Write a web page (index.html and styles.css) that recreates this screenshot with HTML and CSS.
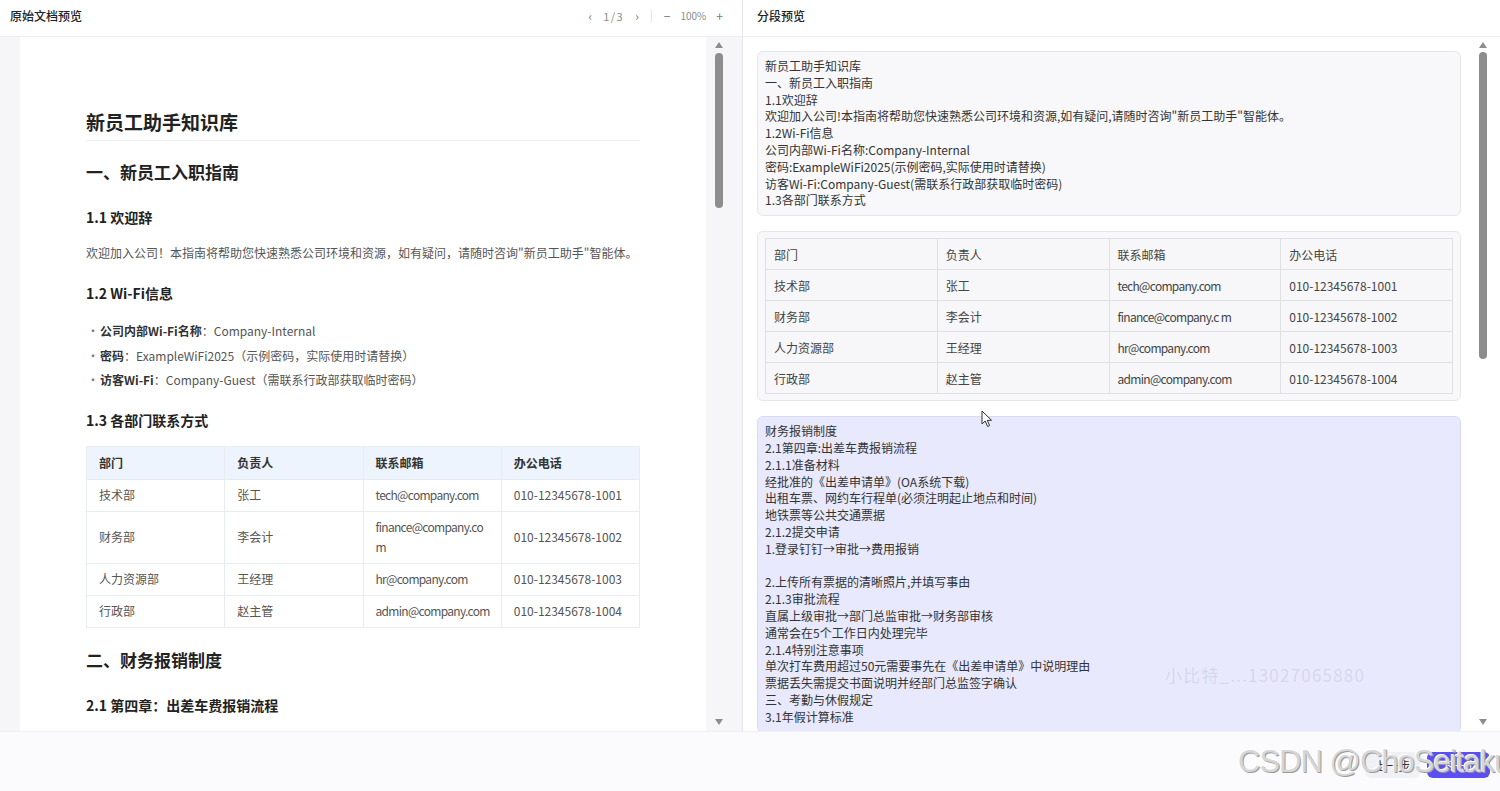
FILE: index.html
```html
<!DOCTYPE html>
<html lang="zh-CN">
<head>
<meta charset="utf-8">
<title>文档分段预览</title>
<link rel="stylesheet" href="styles.css">
</head>
<body>
<div class="app">
  <div class="panels">
    <section class="panel panel-left">
      <header class="panel-head">
        <span class="panel-title">原始文档预览</span>
        <div class="toolbar">
          <span class="tb-btn">‹</span>
          <span class="tb-page">1/3</span>
          <span class="tb-btn">›</span>
          <span class="tb-sep"></span>
          <span class="tb-btn">−</span>
          <span class="tb-zoom">100%</span>
          <span class="tb-btn">+</span>
        </div>
      </header>
      <div class="body-doc">
        <article class="doc">
          <h1>新员工助手知识库</h1>
          <h2>一、新员工入职指南</h2>
          <h3>1.1 欢迎辞</h3>
          <p>欢迎加入公司！本指南将帮助您快速熟悉公司环境和资源，如有疑问，请随时咨询"新员工助手"智能体。</p>
          <h3>1.2 Wi-Fi信息</h3>
          <ul class="doc-list">
            <li><span class="dot">·</span><span><strong>公司内部Wi-Fi名称</strong>：Company-Internal</span></li>
            <li><span class="dot">·</span><span><strong>密码</strong>：ExampleWiFi2025（示例密码，实际使用时请替换）</span></li>
            <li><span class="dot">·</span><span><strong>访客Wi-Fi</strong>：Company-Guest（需联系行政部获取临时密码）</span></li>
          </ul>
          <h3>1.3 各部门联系方式</h3>
          <table class="doc-table">
            <thead>
              <tr><th>部门</th><th>负责人</th><th>联系邮箱</th><th>办公电话</th></tr>
            </thead>
            <tbody>
              <tr><td>技术部</td><td>张工</td><td class="mail">tech@company.com</td><td>010-12345678-1001</td></tr>
              <tr><td>财务部</td><td>李会计</td><td class="mail">finance@company.co<br>m</td><td>010-12345678-1002</td></tr>
              <tr><td>人力资源部</td><td>王经理</td><td class="mail">hr@company.com</td><td>010-12345678-1003</td></tr>
              <tr><td>行政部</td><td>赵主管</td><td class="mail">admin@company.com</td><td>010-12345678-1004</td></tr>
            </tbody>
          </table>
          <h2>二、财务报销制度</h2>
          <h3>2.1 第四章：出差车费报销流程</h3>
        </article>
        <div class="scrollbar sb-left">
          <span class="sb-up"></span>
          <span class="sb-thumb"></span>
          <span class="sb-down"></span>
        </div>
      </div>
    </section>

    <section class="panel panel-right">
      <header class="panel-head">
        <span class="panel-title">分段预览</span>
      </header>
      <div class="body-seg">
        <div class="seg-list">
          <div class="seg">新员工助手知识库
一、新员工入职指南
1.1欢迎辞
欢迎加入公司!本指南将帮助您快速熟悉公司环境和资源,如有疑问,请随时咨询"新员工助手"智能体。
1.2Wi-Fi信息
公司内部Wi-Fi名称:Company-Internal
密码:ExampleWiFi2025(示例密码,实际使用时请替换)
访客Wi-Fi:Company-Guest(需联系行政部获取临时密码)
1.3各部门联系方式</div>
          <div class="seg seg-table">
            <table class="seg-tbl">
              <tr><td>部门</td><td>负责人</td><td>联系邮箱</td><td>办公电话</td></tr>
              <tr><td>技术部</td><td>张工</td><td class="mail">tech@company.com</td><td>010-12345678-1001</td></tr>
              <tr><td>财务部</td><td>李会计</td><td class="mail">finance@company.c m</td><td>010-12345678-1002</td></tr>
              <tr><td>人力资源部</td><td>王经理</td><td class="mail">hr@company.com</td><td>010-12345678-1003</td></tr>
              <tr><td>行政部</td><td>赵主管</td><td class="mail">admin@company.com</td><td>010-12345678-1004</td></tr>
            </table>
          </div>
          <div class="seg seg-hl">财务报销制度
2.1第四章:出差车费报销流程
2.1.1准备材料
经批准的《出差申请单》(OA系统下载)
出租车票、网约车行程单(必须注明起止地点和时间)
地铁票等公共交通票据
2.1.2提交申请
1.登录钉钉→审批→费用报销

2.上传所有票据的清晰照片,并填写事由
2.1.3审批流程
直属上级审批→部门总监审批→财务部审核
通常会在5个工作日内处理完毕
2.1.4特别注意事项
单次打车费用超过50元需要事先在《出差申请单》中说明理由
票据丢失需提交书面说明并经部门总监签字确认
三、考勤与休假规定
3.1年假计算标准</div>
        </div>
        <div class="scrollbar sb-right">
          <span class="sb-up"></span>
          <span class="sb-thumb"></span>
          <span class="sb-down"></span>
        </div>
      </div>
    </section>
  </div>

  <footer class="footer">
    <span class="btn btn-prev">上一步</span>
    <span class="btn btn-next">下一步</span>
  </footer>
</div>

<div class="wm-tel">小比特_...13027065880</div>
<div class="wm-csdn">CSDN @ChoSeitaku</div>
<svg class="cursor" width="12" height="18" viewBox="0 0 12 18" aria-hidden="true">
  <path d="M1 1 L1 14 L4.2 11 L6.6 16.5 L8.6 15.6 L6.3 10.3 L10.6 10.3 Z" fill="#fff" stroke="#333" stroke-width="1" stroke-linejoin="round"/>
</svg>
</body>
</html>
```

FILE: styles.css
```css
* { box-sizing: border-box; }

html, body {
  margin: 0;
  padding: 0;
}

body {
  width: 1500px;
  height: 791px;
  overflow: hidden;
  position: relative;
  background: #fff;
  color: #333;
  font-family: "Noto Sans CJK SC", "Noto Sans", sans-serif;
}

.app {
  display: flex;
  flex-direction: column;
  height: 791px;
}

.panels {
  display: flex;
  height: 731px;
}

.panel {
  display: flex;
  flex-direction: column;
  min-width: 0;
}

.panel-left {
  width: 743px;
  flex: none;
  border-right: 1px solid #e6e7ea;
}

.panel-right {
  flex: 1;
}

.panel-head {
  height: 37px;
  flex: none;
  display: flex;
  align-items: center;
  justify-content: space-between;
  padding: 0 19px 5px 10px;
  border-bottom: 1px solid #eceef1;
  background: #fff;
}

.panel-right .panel-head {
  padding-left: 14px;
}

.panel-title {
  font-size: 12px;
  font-weight: 500;
  color: #222;
}

.toolbar {
  display: flex;
  align-items: center;
  gap: 10px;
  font-size: 11px;
  color: #8c8c8c;
}

.tb-btn {
  font-size: 12px;
  color: #777;
}

.tb-page {
  letter-spacing: 1.5px;
  margin: 0 1px;
}

.tb-sep {
  width: 1px;
  height: 12px;
  background: #e3e3e6;
  margin: 0 2px;
}

.tb-zoom {
  font-size: 10px;
}

/* ---------- left document ---------- */
.body-doc {
  flex: 1;
  display: flex;
  overflow: hidden;
  background: #f6f6f8;
}

.doc {
  flex: none;
  width: 686px;
  margin-left: 20px;
  padding: 71px 66px 0 66px;
  background: #fff;
  color: #222;
}

.doc h1 {
  margin: 0 0 18px;
  padding-bottom: 4px;
  font-size: 19px;
  line-height: 28px;
  font-weight: 700;
  border-bottom: 1px solid #eeeff2;
}

.doc h2 {
  margin: 0 0 21px;
  font-size: 17px;
  line-height: 26px;
  font-weight: 700;
}

.doc h3 {
  margin: 0 0 15px;
  font-size: 14px;
  line-height: 22px;
  font-weight: 700;
}

.doc p {
  margin: 0 0 19px;
  font-size: 12px;
  line-height: 20px;
  color: #555;
}

.doc-list {
  list-style: none;
  margin: 0 0 16px;
  padding: 0;
}

.doc-list li {
  display: flex;
  font-size: 12px;
  line-height: 24.5px;
  color: #555;
}

.doc-list .dot {
  width: 14px;
  flex: none;
  padding-left: 1px;
  color: #777;
}

.doc-list strong {
  font-weight: 700;
  color: #333;
}

.doc-table {
  width: 554px;
  margin: 0 0 19px;
  border-collapse: collapse;
  table-layout: fixed;
  font-size: 12px;
}

.doc-table th,
.doc-table td {
  border: 1px solid #e7ecf3;
  padding: 6px 6px 6px 12px;
  line-height: 20px;
  text-align: left;
  overflow-wrap: anywhere;
}

.doc-table td {
  padding-top: 5.5px;
  padding-bottom: 5.5px;
  color: #555;
}

.doc-table th {
  background: #eef4fd;
  font-weight: 700;
  color: #333;
}

.mail {
  letter-spacing: -0.7px;
}

/* ---------- scrollbars ---------- */
.scrollbar {
  width: 16px;
  flex: none;
  display: flex;
  flex-direction: column;
  align-items: center;
  padding: 5px 0 6px;
}

.sb-left {
  margin-left: 5px;
}

.sb-right {
  margin-left: 14px;
}

.sb-up {
  width: 0;
  height: 0;
  border-left: 4px solid transparent;
  border-right: 4px solid transparent;
  border-bottom: 6px solid #8d8d8d;
}

.sb-down {
  width: 0;
  height: 0;
  margin-top: auto;
  border-left: 4px solid transparent;
  border-right: 4px solid transparent;
  border-top: 6px solid #8d8d8d;
}

.sb-thumb {
  width: 8px;
  border-radius: 4px;
  background: #8d8d8d;
}

.sb-left .sb-thumb {
  margin-top: 5px;
  height: 155px;
}

.sb-right .sb-thumb {
  margin-top: 4px;
  height: 307px;
}

/* ---------- right segments ---------- */
.body-seg {
  flex: 1;
  display: flex;
  overflow: hidden;
  padding-left: 14px;
  background: #fff;
}

.seg-list {
  width: 704px;
  flex: none;
  margin-top: 14px;
  display: flex;
  flex-direction: column;
  gap: 15px;
}

.seg {
  flex: none;
  border: 1px solid #e6e7ea;
  border-radius: 6px;
  background: #f8f8fa;
  padding: 6px 7px;
  font-size: 12px;
  line-height: 16.8px;
  color: #333;
  white-space: pre-line;
}

.seg-table {
  white-space: normal;
}

.seg-hl {
  background: #e8e9fc;
  border-color: #d8daf5;
}

.seg-tbl {
  width: 100%;
  border-collapse: collapse;
  table-layout: fixed;
  font-size: 12px;
  color: #444;
  background: #f7f7f9;
}

.seg-tbl td {
  border: 1px solid #dfe0e4;
  padding: 6.5px 8px;
  line-height: 17px;
}

/* ---------- footer ---------- */
.footer {
  height: 60px;
  flex: none;
  display: flex;
  justify-content: flex-end;
  align-items: flex-start;
  gap: 7px;
  padding: 20px 10px 0 0;
  border-top: 1px solid #eef0f3;
  background: #fbfbfd;
}

.btn {
  height: 26px;
  display: flex;
  align-items: center;
  justify-content: center;
  border-radius: 6px;
  font-size: 12px;
}

.btn-prev {
  width: 55px;
  background: #f0f1f4;
  color: #333;
}

.btn-next {
  width: 63px;
  background: #5b4ff2;
  color: #fff;
}

/* ---------- overlays ---------- */
.wm-tel {
  position: absolute;
  left: 1165px;
  top: 662px;
  font-size: 17px;
  letter-spacing: 1.2px;
  color: rgba(110, 110, 150, 0.16);
  white-space: nowrap;
  pointer-events: none;
}

.wm-csdn {
  position: absolute;
  left: 1238px;
  top: 744px;
  font-family: "Liberation Sans", Arial, sans-serif;
  font-size: 31px;
  letter-spacing: -1px;
  color: #d6d6d6;
  text-shadow: 1px 1px 0 #9a9a9a, -1px -1px 0 #ffffff;
  white-space: nowrap;
  pointer-events: none;
}

.cursor {
  position: absolute;
  left: 981px;
  top: 410px;
}
```
